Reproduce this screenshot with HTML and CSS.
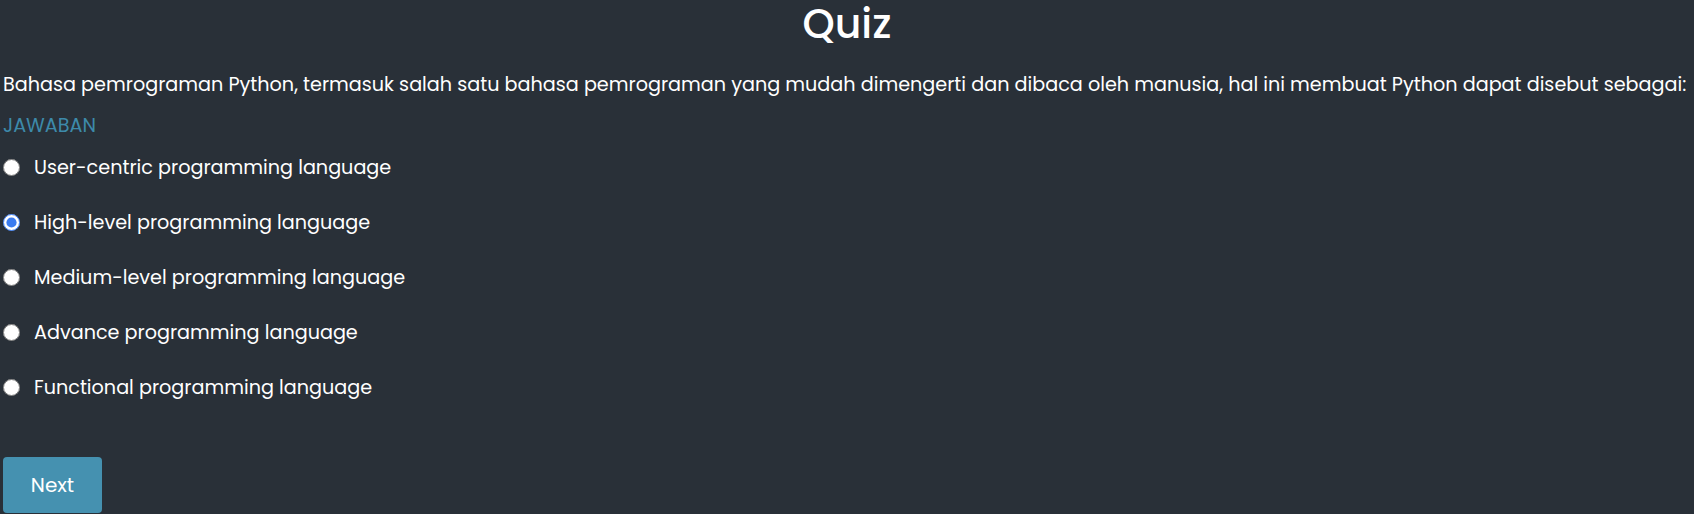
FILE: index.html
```html
<!DOCTYPE html>
<html lang="id">
<head>
<meta charset="utf-8">
<title>Quiz</title>
<link rel="stylesheet" href="styles.css">
</head>
<body>
<main class="quiz">
  <h1 class="quiz-title">Quiz</h1>
  <p class="question">Bahasa pemrograman Python, termasuk salah satu bahasa pemrograman yang mudah dimengerti dan dibaca oleh manusia, hal ini membuat Python dapat disebut sebagai:</p>
  <div class="answer-label">JAWABAN</div>
  <form class="options">
    <label class="option"><input type="radio" name="answer"><span>User-centric programming language</span></label>
    <label class="option"><input type="radio" name="answer" checked><span>High-level programming language</span></label>
    <label class="option"><input type="radio" name="answer"><span>Medium-level programming language</span></label>
    <label class="option"><input type="radio" name="answer"><span>Advance programming language</span></label>
    <label class="option"><input type="radio" name="answer"><span>Functional programming language</span></label>
  </form>
  <button class="next-btn" type="button">Next</button>
</main>
</body>
</html>
```
FILE: styles.css
```css
html, body {
  margin: 0;
  background: #293038;
}
body {
  color: #ffffff;
  font-family: "Poppins", "Open Sans", "Noto Sans", sans-serif;
  height: 514px;
  overflow: hidden;
}
.quiz {
  padding: 0 3px;
  display: flex;
  flex-direction: column;
  align-items: flex-start;
}
.quiz-title {
  align-self: stretch;
  text-align: center;
  font-size: 41px;
  font-weight: 500;
  line-height: 47px;
  margin: 0;
}
.question {
  margin: 23px 0 0;
  font-size: 19.2px;
  line-height: 29px;
  white-space: nowrap;
}
.answer-label {
  margin-top: 12px;
  font-size: 19.2px;
  line-height: 29px;
  color: #3d8aaa;
}
.options {
  display: flex;
  flex-direction: column;
  margin: 0;
}
.option {
  display: flex;
  align-items: center;
  height: 55px;
  gap: 14px;
  font-size: 19.2px;
  cursor: pointer;
}
.option input {
  width: 17px;
  height: 17px;
  margin: 0;
  accent-color: #3b7cf0;
}
.next-btn {
  margin-top: 42px;
  width: 99px;
  height: 56px;
  border: none;
  border-radius: 4px;
  background: #4591b0;
  color: #ffffff;
  font-family: inherit;
  font-size: 20px;
}
```
